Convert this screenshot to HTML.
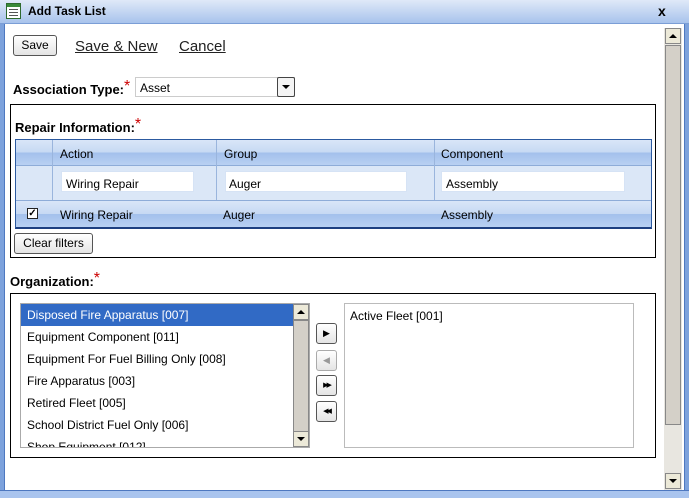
<!DOCTYPE html>
<html><head><style>
*{box-sizing:border-box;margin:0;padding:0}
body{width:689px;height:498px;overflow:hidden;background:#fff;font-family:"Liberation Sans",sans-serif;font-size:12px;color:#000;position:relative}
.a{position:absolute}
.tb{left:0;top:0;width:689px;height:24px;background:linear-gradient(#dfe9f8,#a8c3ec);border-bottom:1px solid #7b9ed6}
.btn{background:linear-gradient(#fff,#e4e4e4);border:1px solid #555;border-radius:3px;text-align:center}
.inp{background:#fff;border:1px solid #d6e3f5}
.row{height:22px;line-height:22px;padding-left:6px;white-space:nowrap;width:273px;overflow:hidden}
.sb{background:#d4d0c8}
.sq{width:16px;height:16px;background:#ece9d8;border:1px solid #888;display:flex;align-items:center;justify-content:center}
</style></head><body>
<div class="a tb"></div>
<div class="a" style="left:6px;top:3px;width:15px;height:16px;border:1px solid #2f6a2f;background:#fff">
 <div style="height:3px;background:#3a8a3a"></div>
 <div style="margin:2px 2px;height:1px;background:#555"></div><div style="margin:2px 2px;height:1px;background:#555"></div><div style="margin:2px 2px;height:1px;background:#555"></div>
</div>
<div class="a" style="left:28px;top:4px;font-weight:bold;font-size:12px">Add Task List</div>
<div class="a" style="left:658px;top:3px;font-weight:bold;font-size:14px">x</div>
<div class="a" style="left:0;top:24px;width:5px;height:474px;background:#7da2dc;border-right:1px solid #4e78c0"></div>
<div class="a" style="left:684px;top:24px;width:5px;height:474px;background:#7da2dc;border-left:1px solid #4e78c0"></div>
<div class="a" style="left:0;top:490px;width:689px;height:8px;background:#a9c4ee;border-top:1px solid #4e78c0"></div>

<div class="a btn" style="left:13px;top:35px;width:44px;height:21px;line-height:19px">Save</div>
<div class="a" style="left:75px;top:38px;font-size:15px;text-decoration:underline;color:#222">Save &amp; New</div>
<div class="a" style="left:179px;top:38px;font-size:15px;text-decoration:underline;color:#222">Cancel</div>

<div class="a" style="left:13px;top:81px;font-weight:bold;font-size:13px">Association Type:<span style="color:#c00;font-weight:normal;font-size:16px;position:relative;top:-3px">*</span></div>
<div class="a" style="left:135px;top:77px;width:160px;height:20px;border:1px solid #ccc;padding:3px 4px">Asset</div>
<div class="a" style="left:277px;top:77px;width:18px;height:20px;border:1px solid #444;border-radius:2px;background:#f4f4f4"><div style="margin:7px 0 0 4px;width:0;height:0;border-left:4px solid transparent;border-right:4px solid transparent;border-top:4px solid #000"></div></div>

<div class="a" style="left:10px;top:104px;width:646px;height:154px;border:1px solid #000"></div>
<div class="a" style="left:15px;top:119px;font-weight:bold;font-size:13px">Repair Information:<span style="color:#c00;font-weight:normal;font-size:16px;position:relative;top:-3px">*</span></div>
<div class="a" style="left:15px;top:139px;width:637px;height:90px;border:1px solid #2c5aa0;border-bottom:2px solid #1d3f80;background:#dbe7f7"></div>
<div class="a" style="left:16px;top:140px;width:635px;height:26px;background:linear-gradient(#d9e6f8 0%,#c6d9f3 50%,#a3c0ec 51%,#b8d0f2 100%);border-bottom:1px solid #8eacd8"></div>
<div class="a" style="left:16px;top:200px;width:635px;height:27px;background:linear-gradient(#d9e6f8 0%,#c6d9f3 50%,#a3c0ec 51%,#b8d0f2 100%);border-top:1px solid #8eacd8"></div>
<div class="a" style="left:52px;top:140px;width:1px;height:60px;background:#9ab5dd"></div>
<div class="a" style="left:216px;top:140px;width:1px;height:60px;background:#9ab5dd"></div>
<div class="a" style="left:434px;top:140px;width:1px;height:60px;background:#9ab5dd"></div>
<div class="a" style="left:60px;top:147px">Action</div>
<div class="a" style="left:224px;top:147px">Group</div>
<div class="a" style="left:441px;top:147px">Component</div>
<div class="a inp" style="left:61px;top:171px;width:133px;height:21px;padding:5px 4px">Wiring Repair</div>
<div class="a inp" style="left:225px;top:171px;width:182px;height:21px;padding:5px 3px">Auger</div>
<div class="a inp" style="left:441px;top:171px;width:184px;height:21px;padding:5px 4px">Assembly</div>
<div class="a" style="left:27px;top:208px;width:11px;height:11px;border:1px solid #222;background:#fff;font-size:10px;line-height:9px;text-align:center;font-weight:bold">✓</div>
<div class="a" style="left:60px;top:208px">Wiring Repair</div>
<div class="a" style="left:223px;top:208px">Auger</div>
<div class="a" style="left:441px;top:208px">Assembly</div>
<div class="a btn" style="left:14px;top:233px;width:79px;height:21px;line-height:19px">Clear filters</div>

<div class="a" style="left:10px;top:273px;font-weight:bold;font-size:13px">Organization:<span style="color:#c00;font-weight:normal;font-size:16px;position:relative;top:-3px">*</span></div>
<div class="a" style="left:10px;top:293px;width:646px;height:165px;border:1px solid #000"></div>
<div class="a" style="left:20px;top:303px;width:290px;height:145px;border:1px solid #aaa;overflow:hidden">
 <div class="row" style="background:#316ac5;color:#fff">Disposed Fire Apparatus [007]</div>
 <div class="row">Equipment Component [011]</div>
 <div class="row">Equipment For Fuel Billing Only [008]</div>
 <div class="row">Fire Apparatus [003]</div>
 <div class="row">Retired Fleet [005]</div>
 <div class="row">School District Fuel Only [006]</div>
 <div class="row">Shop Equipment [012]</div>
</div>
<div class="a sb" style="left:293px;top:304px;width:16px;height:143px;background:#e8e6e0"></div>
<div class="a sq" style="left:293px;top:304px"><div style="border-left:4px solid transparent;border-right:4px solid transparent;border-bottom:4px solid #000"></div></div>
<div class="a" style="left:293px;top:320px;width:16px;height:112px;background:#d4d0c8;border:1px solid #888"></div>
<div class="a sq" style="left:293px;top:431px"><div style="border-left:4px solid transparent;border-right:4px solid transparent;border-top:4px solid #000"></div></div>

<div class="a btn" style="left:316px;top:323px;width:21px;height:21px;font-size:9px;line-height:19px">▶</div>
<div class="a btn" style="left:316px;top:350px;width:21px;height:21px;font-size:9px;line-height:19px;border-color:#aaa;color:#999">◀</div>
<div class="a btn" style="left:316px;top:375px;width:21px;height:21px;font-size:7px;line-height:19px;letter-spacing:-2px">▶▶</div>
<div class="a btn" style="left:316px;top:401px;width:21px;height:21px;font-size:7px;line-height:19px;letter-spacing:-2px">◀◀</div>
<div class="a" style="left:344px;top:303px;width:290px;height:145px;border:1px solid #bbb;padding:5px 5px">Active Fleet [001]</div>

<div class="a" style="left:664px;top:28px;width:18px;height:462px;background:#e8e6e0"></div>
<div class="a sq" style="left:665px;top:28px"><div style="border-left:4px solid transparent;border-right:4px solid transparent;border-bottom:4px solid #000"></div></div>
<div class="a" style="left:665px;top:45px;width:16px;height:380px;background:#d4d0c8;border:1px solid #888"></div>
<div class="a sq" style="left:665px;top:473px"><div style="border-left:4px solid transparent;border-right:4px solid transparent;border-top:4px solid #000"></div></div>
</body></html>
